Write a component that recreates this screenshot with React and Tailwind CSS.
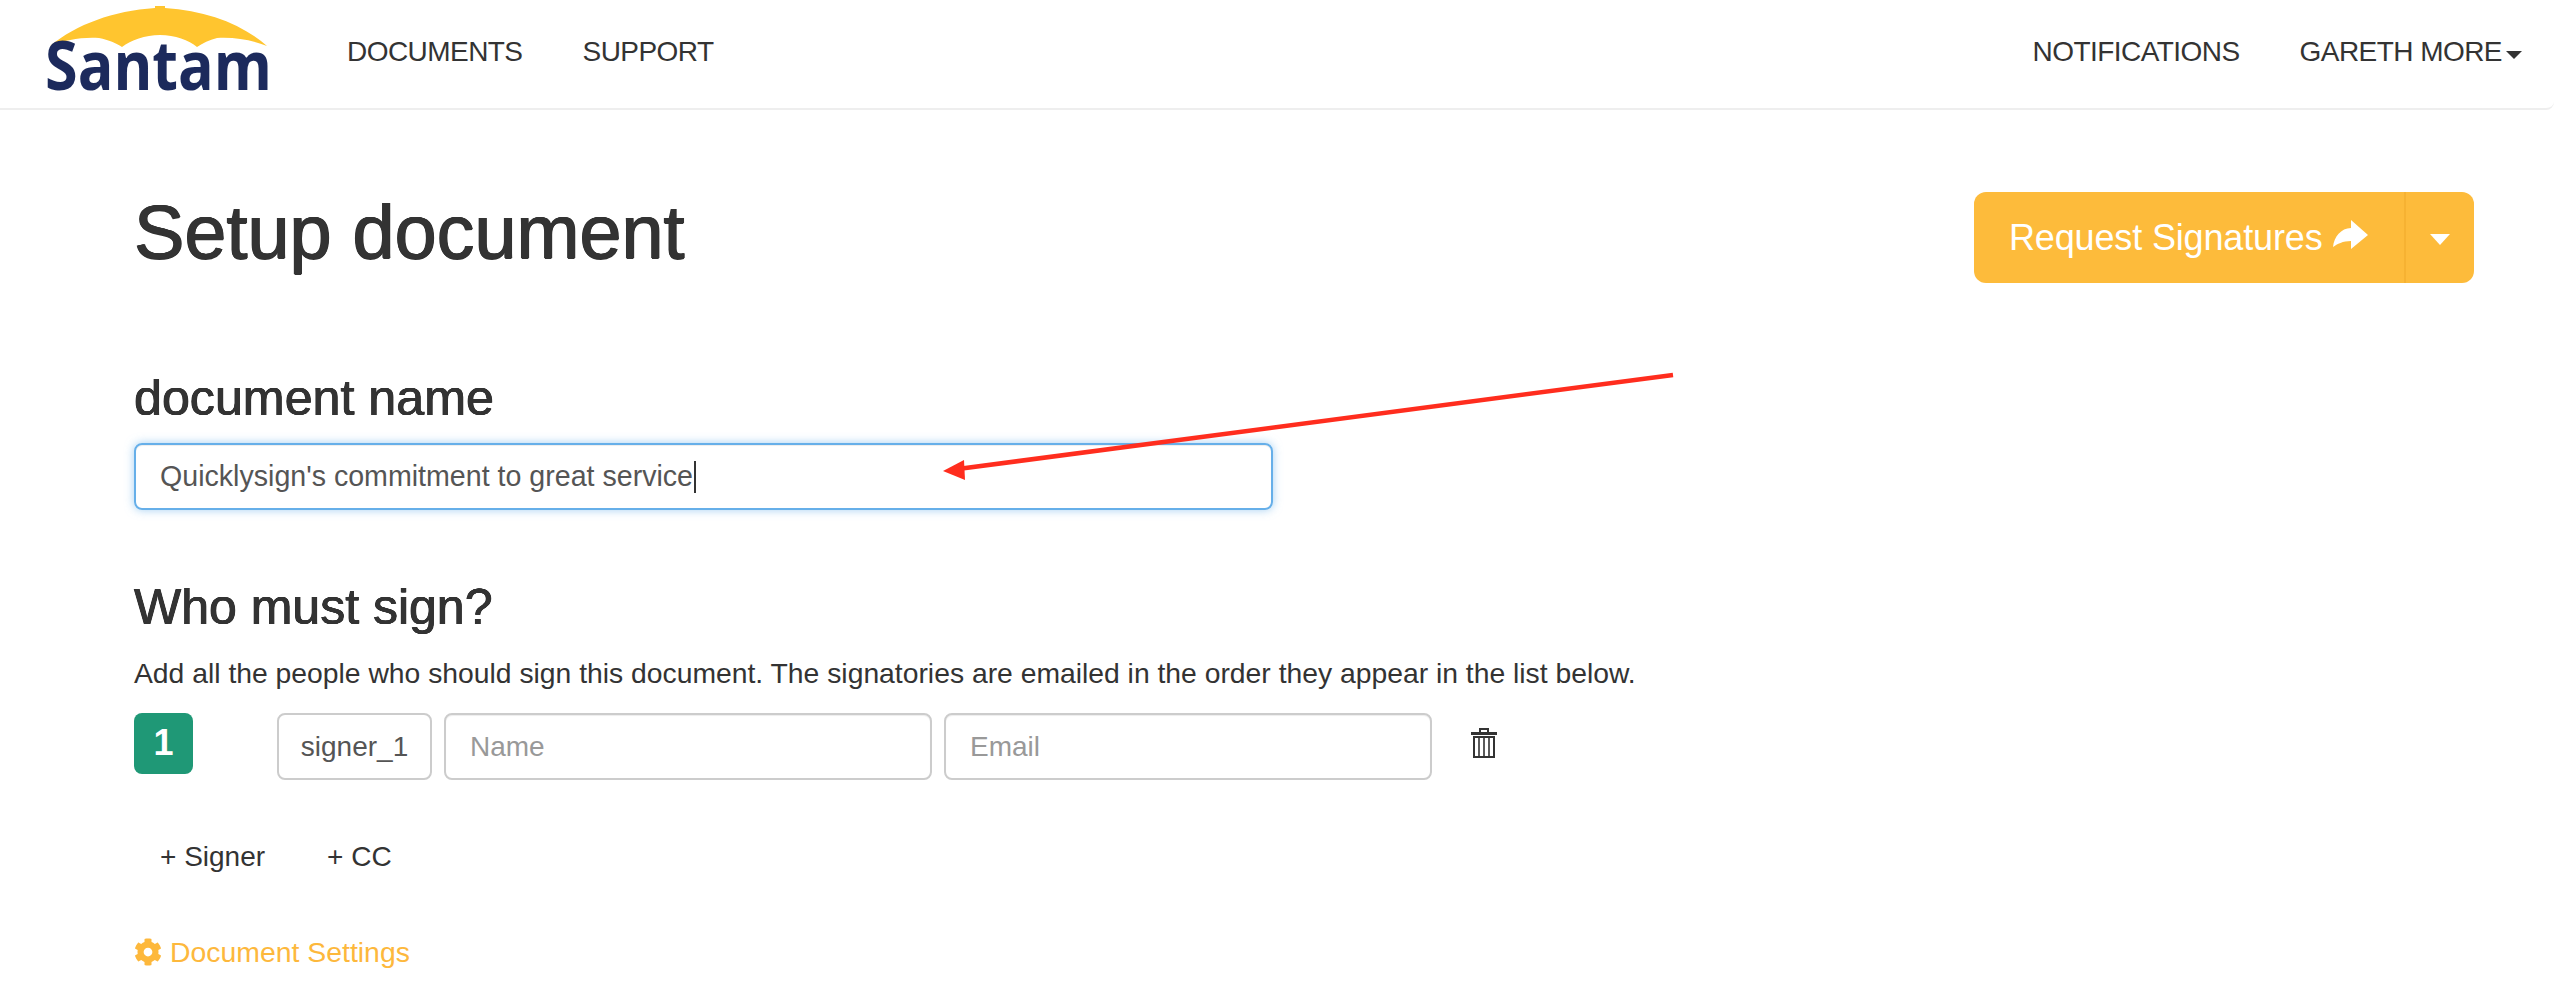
import React from "react";
import { FaCog } from "react-icons/fa";

function Logo() {
  return (
    <svg width="230" height="92" viewBox="0 0 230 92" className="block shrink-0 overflow-visible">
      <path d="M3 44 C30 22 66 9 108 6 L108 4 L118 4 L118 6 C160 9 195 22 220 44 C205 38 188 35 170 36 C162 38 156 41 150 45 C142 38 128 33 113 33 C98 33 84 38 75 45 C69 41 62 38 52 36 C34 35 18 38 3 44 Z" fill="#ffc52f" />
      <text x="-2" y="88" fontFamily="'Open Sans', sans-serif" fontWeight="700" fontSize="68" fill="#1c2a5c" textLength="227" lengthAdjust="spacingAndGlyphs">Santam</text>
    </svg>
  );
}

function ShareArrow() {
  return (
    <svg width="36" height="30" viewBox="0 0 36 30" className="mb-[5px] block shrink-0" fill="#fff">
      <path d="M18 0 L35 15 L18 29 L18 21 C10 21 4 24 0 27 C1 17 8 8 18 8 Z" />
    </svg>
  );
}

function Trash() {
  return (
    <svg width="26" height="30" viewBox="0 0 26 30" className="block">
      <path d="M9 4 V1 H17 V4" fill="none" stroke="#333" strokeWidth="2" />
      <rect x="0" y="4" width="26" height="3" fill="#333" />
      <path d="M3 9 H23 V29 H3 Z" fill="none" stroke="#333" strokeWidth="2" />
      <path d="M8 9 V28 M13 9 V28 M18 9 V28" stroke="#333" strokeWidth="1.6" />
    </svg>
  );
}

export default function App() {
  return (
    <div className="relative h-[1000px] overflow-hidden bg-white font-['Liberation_Sans',Arial,sans-serif] text-[#333]">
      <nav className="flex h-[110px] items-start rounded-br-lg border-b-2 border-[#eeeeee] pl-[47px] pr-[32px]">
        <div className="pt-[2px]"><Logo /></div>
        <div className="ml-[70px] flex gap-[60px] pt-[36px] text-[28px] leading-[32px] tracking-[-0.55px]">
          <a>DOCUMENTS</a>
          <a>SUPPORT</a>
        </div>
        <div className="ml-auto flex gap-[60px] pt-[36px] text-[28px] leading-[32px] tracking-[-0.55px]">
          <a>NOTIFICATIONS</a>
          <a className="flex items-center">
            GARETH MORE
            <span className="ml-[4px] mt-[5px] h-0 w-0 border-x-[8px] border-t-[8px] border-x-transparent border-t-[#333]" />
          </a>
        </div>
      </nav>

      <main className="pl-[134px] pr-[80px] pt-[82px]">
        <div className="flex items-start justify-between">
          <h1 className="text-[75.6px] leading-[80px] [text-shadow:0.7px_0_0_#333,-0.7px_0_0_#333,0_0.5px_0_#333,0_-0.5px_0_#333]">Setup document</h1>
          <div className="flex h-[91px] w-[500px] rounded-xl bg-[#fdbb3b] text-white">
            <div className="flex flex-1 items-center gap-[10px] pl-[35px] text-[36px] leading-[40px] tracking-[-0.15px]">
              Request Signatures
              <ShareArrow />
            </div>
            <div className="flex w-[70px] items-center justify-center border-l-2 border-[#f6b232]">
              <span className="mt-[4px] h-0 w-0 border-x-[10px] border-t-[11px] border-x-transparent border-t-white" />
            </div>
          </div>
        </div>

        <h2 className="mt-[90px] text-[50.2px] leading-[50px] [text-shadow:0.5px_0_0_#333,-0.5px_0_0_#333,0_0.3px_0_#333,0_-0.3px_0_#333]">document name</h2>
        <div className="mt-[20px] flex h-[67px] w-[1139px] items-center rounded-lg border-2 border-[#66afe9] pl-[24px] text-[28.6px] text-[#555] shadow-[inset_0_1px_1px_rgba(0,0,0,0.075),0_0_10px_rgba(102,175,233,0.6)]">
          Quicklysign's commitment to great service
          <span className="ml-[1px] h-[32px] w-[2px] bg-[#333]" />
        </div>

        <h2 className="mt-[72px] text-[50px] leading-[50px] [text-shadow:0.5px_0_0_#333,-0.5px_0_0_#333,0_0.3px_0_#333,0_-0.3px_0_#333]">Who must sign?</h2>
        <p className="mt-[25px] text-[28.3px] leading-[32px]">Add all the people who should sign this document. The signatories are emailed in the order they appear in the list below.</p>

        <div className="mt-[24px] flex items-start">
          <div className="flex h-[61px] w-[59px] items-center justify-center rounded-lg bg-[#1f9876] pb-[2px] text-[36px] font-bold text-white">1</div>
          <div className="ml-[84px] flex h-[67px] w-[155px] items-center justify-center rounded-lg border-2 border-[#cccccc] text-[28px] text-[#555]">signer_1</div>
          <input placeholder="Name" className="ml-[12px] h-[67px] w-[488px] rounded-lg border-2 border-[#cccccc] pl-[24px] text-[28px] text-[#555] shadow-[inset_0_1px_1px_rgba(0,0,0,0.075)] outline-none placeholder:text-[#999]" />
          <input placeholder="Email" className="ml-[12px] h-[67px] w-[488px] rounded-lg border-2 border-[#cccccc] pl-[24px] text-[28px] text-[#555] shadow-[inset_0_1px_1px_rgba(0,0,0,0.075)] outline-none placeholder:text-[#999]" />
          <div className="ml-[39px] mt-[15px]"><Trash /></div>
        </div>

        <div className="mt-[61px] flex gap-[62px] pl-[26px] text-[28px] leading-[32px]">
          <span>+ Signer</span>
          <span>+ CC</span>
        </div>

        <div className="mt-[63px] flex items-center gap-[8px] text-[28.4px] leading-[32px] text-[#fdb83c]">
          <FaCog className="h-[28px] w-[28px]" />
          <span>Document Settings</span>
        </div>
      </main>

      <svg width="2554" height="1000" className="pointer-events-none absolute left-0 top-0">
        <line x1="1673" y1="375" x2="958" y2="469" stroke="#ff2d1e" strokeWidth="4.5" />
        <path d="M943 471 L964 460 L965 480 Z" fill="#ff2d1e" />
      </svg>
    </div>
  );
}
